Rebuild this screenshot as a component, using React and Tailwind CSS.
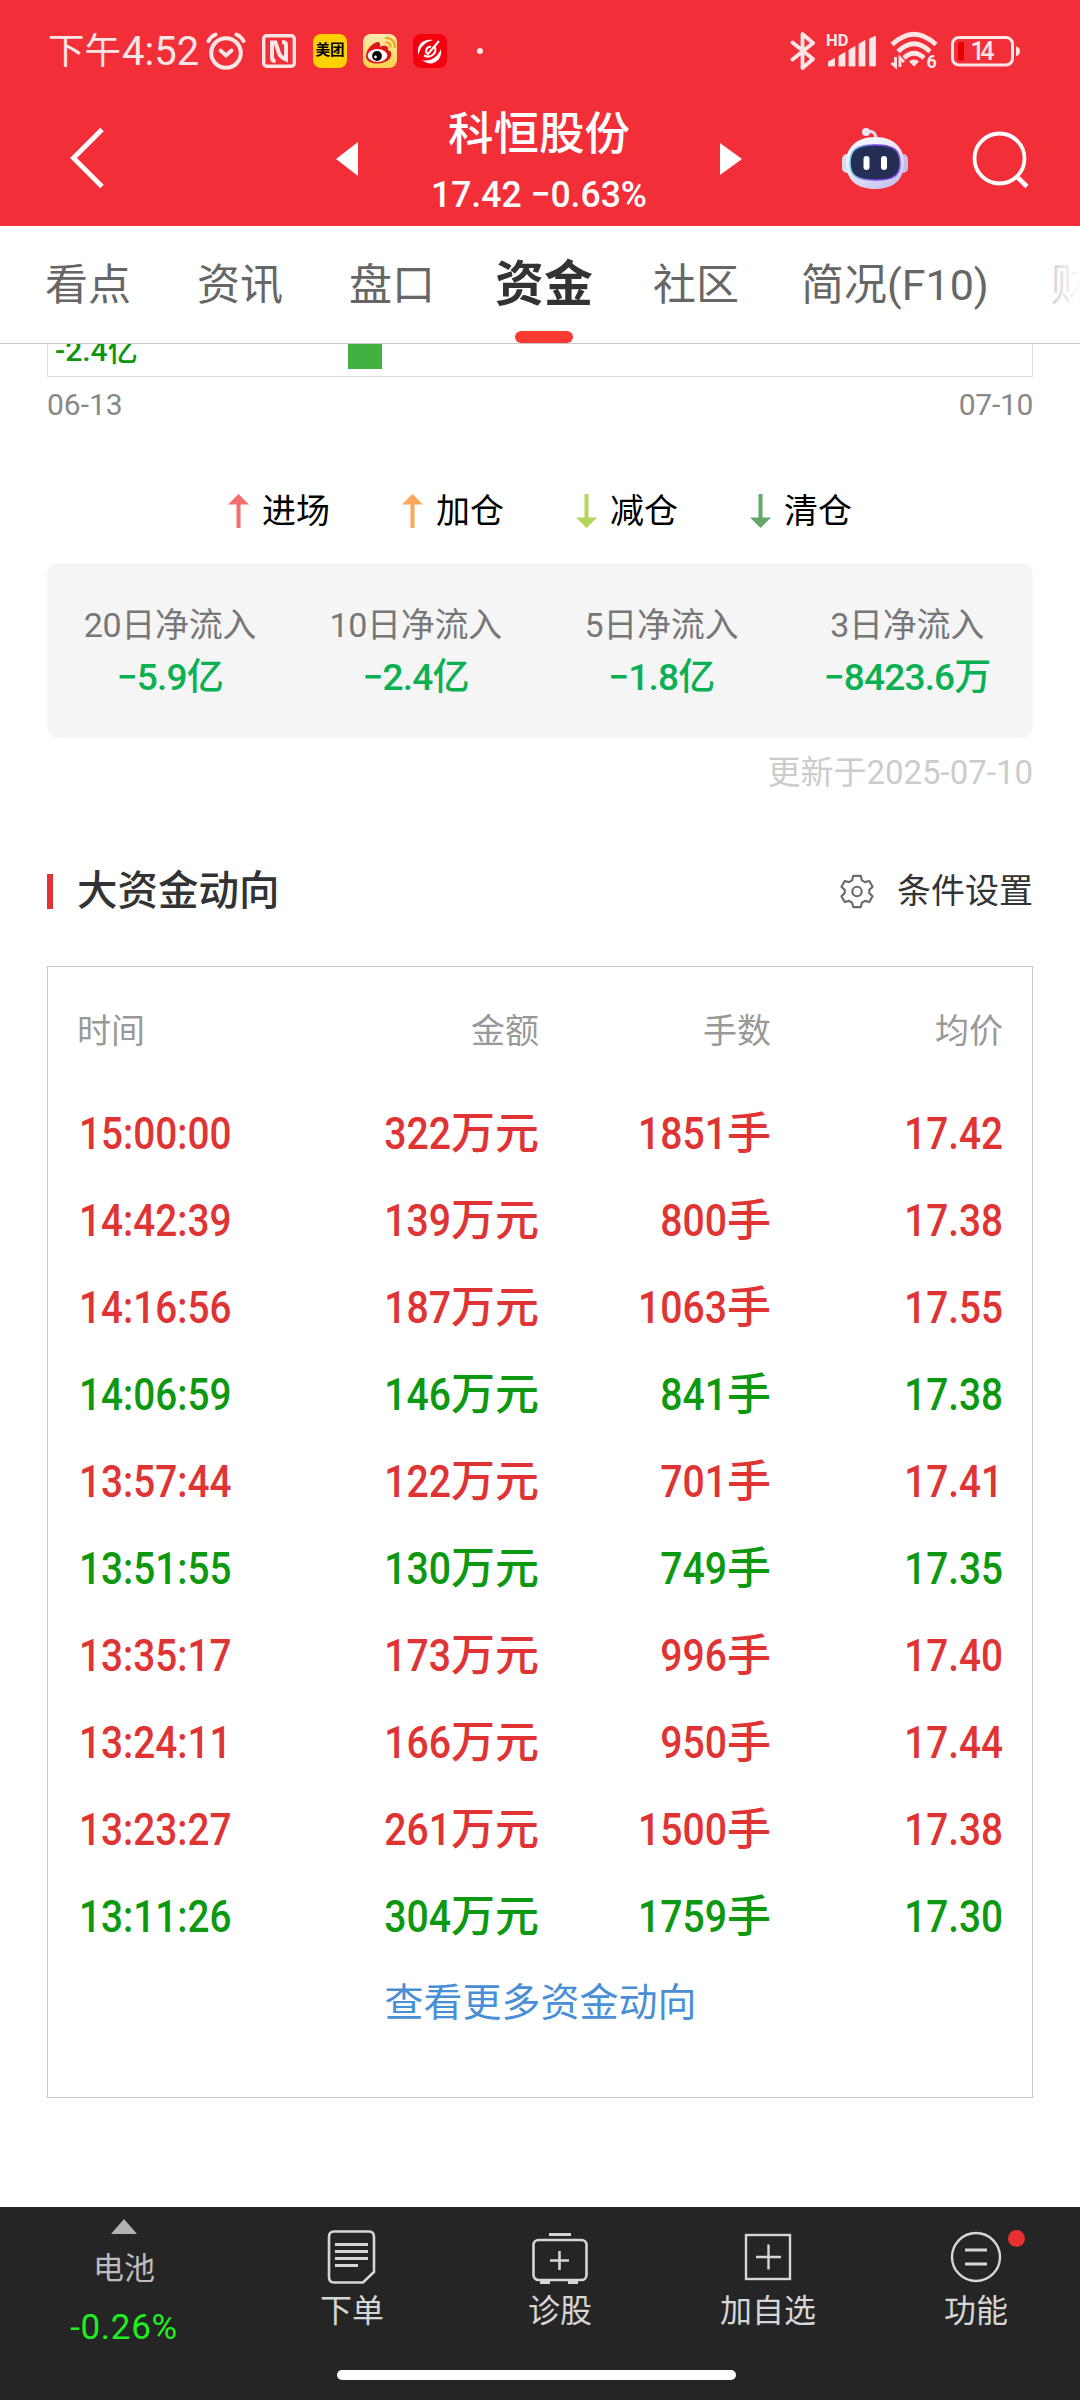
import React from 'react';

const TABS = ['看点', '资讯', '盘口', '资金', '社区', '简况(F10)', '财务'];

const LEGEND = [
  { label: '进场', color: '#f26d6d', up: true },
  { label: '加仓', color: '#fba75c', up: true },
  { label: '减仓', color: '#b3d65c', up: false },
  { label: '清仓', color: '#62a968', up: false },
];

const INFLOWS = [
  { label: '20日净流入', value: '−5.9亿' },
  { label: '10日净流入', value: '−2.4亿' },
  { label: '5日净流入', value: '−1.8亿' },
  { label: '3日净流入', value: '−8423.6万' },
];

const TRADES = [
  { time: '15:00:00', amount: '322', lots: '1851', price: '17.42', buy: true },
  { time: '14:42:39', amount: '139', lots: '800', price: '17.38', buy: true },
  { time: '14:16:56', amount: '187', lots: '1063', price: '17.55', buy: true },
  { time: '14:06:59', amount: '146', lots: '841', price: '17.38', buy: false },
  { time: '13:57:44', amount: '122', lots: '701', price: '17.41', buy: true },
  { time: '13:51:55', amount: '130', lots: '749', price: '17.35', buy: false },
  { time: '13:35:17', amount: '173', lots: '996', price: '17.40', buy: true },
  { time: '13:24:11', amount: '166', lots: '950', price: '17.44', buy: true },
  { time: '13:23:27', amount: '261', lots: '1500', price: '17.38', buy: true },
  { time: '13:11:26', amount: '304', lots: '1759', price: '17.30', buy: false },
];

/* Status bar icons */
const AlarmIcon = () => (
  <svg width="40" height="38" viewBox="0 0 40 38" fill="none" stroke="currentColor" strokeLinecap="round">
    <circle cx="20" cy="21" r="14.800" strokeWidth="4" />
    <path d="M2.500 9 Q5 4.500 9.500 2.500 M37.500 9 Q35 4.500 30.500 2.500" strokeWidth="4" />
    <path d="M14.500 18.500 L20 23.500 L25.500 18.500" strokeWidth="3.800" />
  </svg>
);

const NfcIcon = () => (
  <svg width="34" height="34" viewBox="0 0 34 34" fill="none" stroke="currentColor" strokeWidth="3.400">
    <rect x="1.700" y="1.700" width="30.600" height="30.600" rx="3" />
    <path d="M13.500 27 Q10 27 10 23.500 V8.500 H13.500 L17 19 Q18 23 24 25.500 V11 Q24 8 20 8" strokeWidth="4" />
  </svg>
);

const WeiboIcon = () => (
  <svg width="34" height="34" viewBox="0 0 34 34">
    <defs>
      <linearGradient id="weiboBg" x1="0" y1="0" x2="0" y2="1">
        <stop offset="0" stopColor="#ffeab0" />
        <stop offset="1" stopColor="#fcd24c" />
      </linearGradient>
    </defs>
    <rect width="34" height="34" rx="8" fill="url(#weiboBg)" />
    <path d="M3 22 C3 14 12 8 15 8 C17 8 18 11 16.500 13 C21 11 26 11 25 16 C28 17 29 19 28 22 C26 31 3 33 3 22 Z" fill="#e1151c" />
    <ellipse cx="14.500" cy="21.500" rx="9.800" ry="6.500" fill="#fff" />
    <circle cx="14" cy="22" r="4.900" fill="#000" />
    <circle cx="12.500" cy="23" r="1.400" fill="#fff" />
    <path d="M22 4 C28 3 33 8 31.500 14 M22.500 8.500 C26 8 28.500 10.500 27.500 13.500" fill="none" stroke="#f2a31e" strokeWidth="2.200" />
  </svg>
);

const SwirlIcon = () => (
  <svg width="34" height="34" viewBox="0 0 34 34" fill="#fff">
    <rect width="34" height="34" rx="8" fill="#f5000f" />
    <path d="M20 6 C10 4 3 11 5.500 21 C7 13 12 8 20 6 Z" />
    <path d="M28 15 C30 27 18 34 9 26 C17 28 24 24 28 15 Z" />
    <path d="M26 7 L15 20 C11 18 14 12 18 13 M22 13 C24 19 18 25 11 21.500" fill="none" stroke="#fff" strokeWidth="2" />
  </svg>
);

const BluetoothIcon = () => (
  <svg width="26" height="40" viewBox="0 0 26 40" fill="none" stroke="currentColor" strokeWidth="3.800" strokeLinejoin="round" strokeLinecap="round">
    <path d="M2.500 11.500 L23 28 L12.500 37 V3 L23 12 L2.500 28.500" />
  </svg>
);

const SignalIcon = () => (
  <svg width="48" height="31" viewBox="0 0 48 31" fill="currentColor">
    <path d="M0 30 V26 L6.500 22.500 V30 Z M11 30 V20 L17 16.500 V30 Z M21 30 V14 L27 10.500 V30 Z M31 30 V8 L37 4.500 V30 Z M41.500 30 V3 L47.500 0 V30 Z" stroke="currentColor" strokeWidth="0.800" strokeLinejoin="round" />
  </svg>
);

const WifiIcon = () => (
  <svg width="50" height="42" viewBox="0 0 50 42" fill="none" stroke="currentColor" strokeWidth="4.600">
    <path d="M2 14.500 Q24 -6 46 14.500" />
    <path d="M8 21.500 Q24 6 40 21.500" />
    <path d="M14 28 Q24 18.500 34 28" />
    <path d="M19 31.500 Q24 27.500 29 31.500 L24 36.500 Z" fill="currentColor" stroke="none" />
    <path d="M5.500 27 V36.500 L1.500 33 M10 37 V28 L14 32" strokeWidth="2.800" />
    <text x="36.500" y="37.500" fontSize="18" fontWeight="700" fontFamily="Roboto" fill="currentColor" stroke="none">6</text>
  </svg>
);

const BatteryIcon = () => (
  <svg width="70" height="31" viewBox="0 0 70 31" fill="none">
    <rect x="1.500" y="1.500" width="60" height="27.500" rx="6.500" stroke="currentColor" strokeWidth="3" />
    <path d="M7 8 Q7 6 9 6 H13 V24.500 H9 Q7 24.500 7 22.500 Z" fill="#e60000" />
    <path d="M65 10.500 Q69 11 69 15.300 Q69 19.500 65 20 Z" fill="currentColor" />
    <text x="31.500" y="24" textAnchor="middle" fontSize="25" fontWeight="500" fontFamily="Roboto" textLength="24" fill="currentColor">14</text>
  </svg>
);

const RobotIcon = () => (
  <svg width="68" height="64" viewBox="0 0 68 64">
    <defs>
      <linearGradient id="shell" x1="0" y1="0" x2="0.600" y2="1">
        <stop offset="0" stopColor="#ffffff" />
        <stop offset="0.600" stopColor="#e6e2fa" />
        <stop offset="1" stopColor="#c9c6ee" />
      </linearGradient>
      <linearGradient id="rim" x1="0" y1="0" x2="1" y2="0">
        <stop offset="0" stopColor="#6fd6ea" />
        <stop offset="0.500" stopColor="#7a3fe0" />
        <stop offset="1" stopColor="#7b4be8" />
      </linearGradient>
    </defs>
    <path d="M24 5 C30 3 35 5 35 12" fill="none" stroke="#dcdaf2" strokeWidth="3" />
    <circle cx="25" cy="5" r="4" fill="#e8e6f8" />
    <rect x="1" y="27" width="10" height="19" rx="5" fill="#dcd9f3" />
    <rect x="57" y="27" width="10" height="19" rx="5" fill="#c3bde8" />
    <path d="M34 10 C53 10 63 21 63 36 C63 53 52 62 34 62 C16 62 5 53 5 36 C5 21 15 10 34 10 Z" fill="url(#shell)" />
    <path d="M34 18 C53 18 59 23 59 36 C59 49 52 53 34 53 C16 53 9 49 9 36 C9 23 15 18 34 18 Z" fill="#252e54" stroke="url(#rim)" strokeWidth="1.500" />
    <rect x="22.500" y="29" width="6" height="14" rx="3" fill="#fff" />
    <rect x="40" y="29" width="6" height="14" rx="3" fill="#fff" />
  </svg>
);

const GearIcon = () => (
  <svg width="34" height="35" viewBox="0 0 36 36" fill="none" stroke="#6b6b6b" strokeWidth="2.300" strokeLinejoin="round">
    <path d="M14 1.500 H22 L23.200 6.200 L26.500 8.100 L31 6.800 L34.500 13 L31 16.300 V19.700 L34.500 23 L31 29.200 L26.500 27.900 L23.200 29.800 L22 34.500 H14 L12.800 29.800 L9.500 27.900 L5 29.200 L1.500 23 L5 19.700 V16.300 L1.500 13 L5 6.800 L9.500 8.100 L12.800 6.200 Z" />
    <circle cx="18" cy="18" r="5" />
  </svg>
);

/* Legend arrow, points down when up is false */
const Arrow = ({ color, up }) => (
  <svg width="21" height="34" viewBox="0 0 21 34" fill={color}>
    <path d={up ? 'M10.500 0 L21 10.500 H12.500 V34 H8.500 V10.500 H0 Z' : 'M10.500 34 L21 23.500 H12.500 V0 H8.500 V23.500 H0 Z'} />
  </svg>
);

/* Bottom bar icons */
const OrderIcon = () => (
  <svg width="56" height="56" viewBox="0 0 56 56" fill="none" stroke="#d6d6d6" strokeWidth="2.600">
    <path d="M10 2.500 H45 Q50 2.500 50 8 V43 L39 53.500 H10 Q5 53.500 5 48 V8 Q5 2.500 10 2.500 Z" />
    <path d="M11 15.500 H44 M11 22.500 H44 M11 29.500 H44 M11 36.500 H34" strokeWidth="3" />
  </svg>
);

const DiagnoseIcon = () => (
  <svg width="58" height="56" viewBox="0 0 58 56" fill="none" stroke="#d6d6d6" strokeWidth="2.600">
    <path d="M18 5.500 H40" strokeWidth="3" />
    <rect x="2.500" y="11" width="53" height="40" rx="5" />
    <path d="M19 31.500 H38 M28.500 22 V41" />
    <path d="M9 53 H19 M37 53 H47" strokeWidth="4" />
  </svg>
);

const AddIcon = () => (
  <svg width="56" height="56" viewBox="0 0 56 56" fill="none" stroke="#d6d6d6" strokeWidth="2.400">
    <rect x="6" y="6" width="44" height="44" />
    <path d="M16 28 H41 M28.500 15.500 V40.500" />
  </svg>
);

const FeatureIcon = () => (
  <svg width="56" height="56" viewBox="0 0 56 56" fill="none" stroke="#d6d6d6" strokeWidth="2.400">
    <circle cx="28" cy="28" r="24" />
    <path d="M17 21 H39 M17 35 H39" strokeWidth="3" />
  </svg>
);

const NAV = [
  { label: '下单', icon: OrderIcon },
  { label: '诊股', icon: DiagnoseIcon },
  { label: '加自选', icon: AddIcon },
  { label: '功能', icon: FeatureIcon, badge: true },
];

const StatusBar = () => (
  <div className="flex h-[102px] items-center text-[#fee6e7] pl-[48px] pr-[59px]">
    <div className="flex items-center text-[36.500px] leading-none h-full pt-0.5">
      <span>下午</span>
      <span className="text-[40px] w-[79px] pl-px">4:52</span>
    </div>
    <div className="flex items-center ml-1.5">
      <AlarmIcon />
      <div className="ml-4"><NfcIcon /></div>
      <div className="ml-[17px] w-[34px] h-[34px] rounded-lg bg-[#ffd100] flex items-center justify-center text-black text-[14.500px] font-bold leading-none">
        美团
      </div>
      <div className="ml-4"><WeiboIcon /></div>
      <div className="ml-4"><SwirlIcon /></div>
      <div className="ml-[30px] w-1.5 h-1.5 rounded-full bg-current" />
    </div>
    <div className="flex items-center ml-auto">
      <BluetoothIcon />
      <div className="relative ml-3">
        <SignalIcon />
        <span className="absolute -left-0.5 -top-[3px] text-[16.500px] leading-none font-bold">HD</span>
      </div>
      <div className="ml-3.5"><WifiIcon /></div>
      <div className="ml-[11px]"><BatteryIcon /></div>
    </div>
  </div>
);

const Header = () => (
  <header className="bg-[#f22f38] h-[226px] text-white">
    <StatusBar />
    <div className="flex h-[124px] items-start pl-[70px]">
      <svg className="mt-[25px]" width="36" height="62" viewBox="0 0 36 62" fill="none" stroke="currentColor" strokeWidth="4.800">
        <path d="M32 2.500 L3.500 31 L32 59.500" />
      </svg>
      <svg className="ml-[230px] mt-10" width="22" height="34" viewBox="0 0 22 34" fill="currentColor">
        <path d="M22 0 V34 L0 17 Z" />
      </svg>
      <div className="w-[362px] text-center pt-[3px]">
        <div className="text-[45.500px] font-medium leading-[60px]">科恒股份</div>
        <div className="text-[37px] font-medium leading-[44px] mt-2 scale-x-[0.960]">17.42 −0.63%</div>
      </div>
      <svg className="mt-10" width="22" height="34" viewBox="0 0 22 34" fill="currentColor">
        <path d="M0 1 V33 L22 17 Z" />
      </svg>
      <div className="ml-[99px] mt-[25px]"><RobotIcon /></div>
      <svg className="ml-[63px] mt-[29px]" width="58" height="58" viewBox="0 0 58 58" fill="none" stroke="currentColor" strokeWidth="3.800">
        <circle cx="27.500" cy="27.500" r="25" />
        <path d="M44 45 L55 55.500" strokeWidth="4.500" />
      </svg>
    </div>
  </header>
);

const TabBar = () => (
  <nav className="relative flex items-center h-[118px] border-b border-[#c8c8c8] overflow-hidden pl-[45px] gap-[66px] text-[43px] text-[#666] whitespace-nowrap">
    {TABS.map((tab) =>
      tab === '资金' ? (
        <div key={tab} className="relative -mx-1.5 h-full flex items-center text-[49px] font-bold text-[#333]">
          <span>{tab}</span>
          <span className="absolute left-1/2 -translate-x-1/2 bottom-0 w-[58px] h-3 rounded-full bg-[#fb3a32]" />
        </div>
      ) : (
        <div key={tab} className={tab.length > 2 ? '-mx-1 pt-0.5' : 'pt-0.5'}>{tab}</div>
      )
    )}
    <div className="absolute right-0 top-0 h-full w-10 bg-linear-to-r from-white/60 to-white" />
  </nav>
);

const ChartTail = () => (
  <div className="mx-[47px]">
    <div className="relative h-[33px] overflow-hidden border-x border-b border-[#dcdcdc]">
      <span className="absolute left-[7px] bottom-[5px] text-[30px] leading-[40px] font-medium text-[#0a960f]">-2.4亿</span>
      <span className="absolute left-[300px] top-0 w-[34px] h-[25px] bg-[#41b142]" />
    </div>
    <div className="flex justify-between text-[30px] leading-[36px] mt-[10px] text-[#888]">
      <span>06-13</span>
      <span className="tracking-[-0.300px]">07-10</span>
    </div>
  </div>
);

const Legend = () => (
  <div className="flex justify-center gap-[72px] mt-[63px] h-[50px] text-[34px] text-black">
    {LEGEND.map((item) => (
      <div key={item.label} className="flex items-center gap-[13px]">
        <Arrow color={item.color} up={item.up} />
        <span>{item.label}</span>
      </div>
    ))}
  </div>
);

const InflowPanel = () => (
  <div className="mx-[47px] mt-[27px]">
    <div className="grid grid-cols-4 h-[175px] rounded-xl bg-[#f5f5f5] pt-[38px] pr-[3px] text-center">
      {INFLOWS.map((item) => (
        <div key={item.label}>
          <div className="text-[34px] leading-[48px] text-[#777] tracking-[-0.300px]">{item.label}</div>
          <div className="mt-[3px] text-[37px] leading-[52px] font-medium text-[#0bb053] tracking-[-0.800px]">{item.value}</div>
        </div>
      ))}
    </div>
    <div className="text-right text-[33px] leading-[44px] mt-[13px] text-[#ccc]">更新于2025-07-10</div>
  </div>
);

const TradeTable = () => (
  <section className="mx-[47px] mt-[66px]">
    <div className="flex items-center h-[60px]">
      <span className="w-1.5 h-[35px] bg-[#e33232]" />
      <h2 className="ml-6 text-[40.500px] font-medium text-[#333]">大资金动向</h2>
      <div className="flex items-center ml-auto gap-[23px] text-[34px] text-[#333]">
        <GearIcon />
        <span>条件设置</span>
      </div>
    </div>

    <div className="mt-[45px] h-[1132px] border border-[#c6c6c6] pl-[31px] pr-[30px] pt-[21px]">
      <div className="grid grid-cols-[230px_230px_232px_232px] h-[87px] items-center text-right text-[34px] text-[#999]">
        <span className="text-left -ml-0.5">时间</span>
        <span>金额</span>
        <span>手数</span>
        <span>均价</span>
      </div>
      <div className="pt-[15px]">
        {TRADES.map((row) => (
          <div
            key={row.time}
            className={`grid grid-cols-[230px_230px_232px_232px] h-[87px] items-center text-right text-[44px] font-medium ${
              row.buy ? 'text-[#e03434]' : 'text-[#0c980f]'
            }`}
          >
            <span className="text-left origin-left scale-x-[0.880]">{row.time}</span>
            <span>
              <span className="inline-block origin-right scale-x-[0.890]">{row.amount}</span>万元
            </span>
            <span>
              <span className="inline-block origin-right scale-x-[0.890]">{row.lots}</span>手
            </span>
            <span className="origin-right scale-x-[0.880]">{row.price}</span>
          </div>
        ))}
      </div>
      <div className="text-center text-[39px] leading-[86px] text-[#4a8fd6]">查看更多资金动向</div>
    </div>
  </section>
);

const BottomBar = () => (
  <footer className="mt-auto h-[193px] bg-[#252525]">
    <div className="flex h-[163px]">
      <div className="w-[248px] flex flex-col items-center pt-3">
        <svg width="26" height="15" viewBox="0 0 26 15" fill="#b2b2b2">
          <path d="M13 0 L26 15 H0 Z" />
        </svg>
        <span className="mt-[13px] text-[31px] leading-[44px] text-[#bdbdbd]">电池</span>
        <span className="mt-[15px] text-[35px] leading-[44px] text-[#1eef1e] tracking-[0.700px]">-0.26%</span>
      </div>
      {NAV.map(({ label, icon: Icon, badge }) => (
        <div key={label} className="relative w-[208px] flex flex-col items-center pt-[22px] text-[32px] leading-[44px] text-[#d6d6d6]">
          <Icon />
          <span className="mt-1">{label}</span>
          {badge && <span className="absolute left-[136px] top-[23px] w-[17px] h-[17px] rounded-full bg-[#e83030]" />}
        </div>
      ))}
    </div>
    <div className="ml-[337px] w-[399px] h-2.5 rounded-full bg-white" />
  </footer>
);

const App = () => (
  <div className="flex flex-col w-[1080px] h-[2400px] overflow-hidden bg-white font-[Roboto,'Noto_Sans_CJK_SC',sans-serif]">
    <Header />
    <TabBar />
    <ChartTail />
    <Legend />
    <InflowPanel />
    <TradeTable />
    <BottomBar />
  </div>
);

export default App;
